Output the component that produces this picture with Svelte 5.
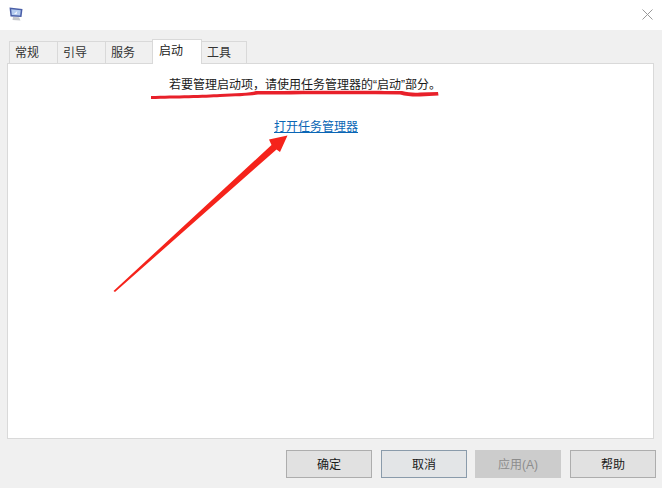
<script lang="ts">
  const tabs = ["常规", "引导", "服务", "启动", "工具"];
  const active = "启动";
  const buttons = [
    { label: "确定" },
    { label: "取消", focus: true },
    { label: "应用(A)", disabled: true },
    { label: "帮助" },
  ];
</script>

<div class="dialog">
  <header class="titlebar">
    <svg class="appicon" width="14" height="14" viewBox="0 0 14 14">
      <path d="M0.5 0.5 L13.5 2 L12.5 10 L1.5 9.5 Z" fill="#4a5fa8" />
      <path d="M2.2 2.2 L11.8 3.3 L11.1 8.6 L2.8 8.1 Z" fill="#b4cbef" />
      <path d="M5 7 L8.3 4 L7.5 7.2 Z" fill="#f4f7fd" />
      <path d="M4 10 L10 10.3 L11.5 13.5 L3.5 13 Z" fill="#c4c6cb" />
    </svg>
    <svg class="close" width="11" height="11" viewBox="0 0 11 11">
      <path d="M0.5 0.5 L10.5 10.5 M10.5 0.5 L0.5 10.5" stroke="#999" stroke-width="1" fill="none" />
    </svg>
  </header>

  <div class="body">
    <nav class="tabs">
      {#each tabs as tab}
        <div class="tab" class:active={tab === active}>{tab}</div>
      {/each}
    </nav>

    <section class="panel">
      <p class="hint">若要管理启动项，请使用任务管理器的“启动”部分。</p>
      <a class="link" href="#top">打开任务管理器</a>
    </section>

    <footer class="actions">
      {#each buttons as b}
        <button class:focus={b.focus} disabled={b.disabled}>{b.label}</button>
      {/each}
    </footer>
  </div>

  <svg class="marks" width="662" height="488" viewBox="0 0 662 488">
    <path d="M151 96 C175 95.5 205 95 220 94 C235 93.5 250 93 256 91 C300 90.5 380 90.5 402 91 C408 92.5 414 93 420 92.5 L438 92 L438.5 95.5 L420 96.5 C412 96.7 406 96 400 94.5 C350 94 300 94.5 258 94.5 C250 96 235 96.5 220 97 C205 98 175 98.5 151 99 Z" fill="#e8202a" />
    <path d="M113.5 291 L271.5 145 L269 139.5 L287.5 135.5 L280 152 L276.5 149.5 L115 292 Z" fill="#f5231b" />
  </svg>
</div>

<style>
  :global(body) {
    margin: 0;
    background: #f0f0f0;
  }

  .dialog {
    position: relative;
    width: 662px;
    height: 488px;
    overflow: hidden;
    font-family: "Liberation Sans", "Noto Sans CJK SC", sans-serif;
    font-size: 12px;
    color: #1a1a1a;
  }

  .titlebar {
    height: 30px;
    background: #fff;
    display: flex;
    align-items: flex-start;
    justify-content: space-between;
    padding: 7px 9px 0 9px;
    box-sizing: border-box;
  }

  .close {
    margin-top: 2px;
  }

  .body {
    height: 458px;
    background: #f0f0f0;
    padding: 9px 6px 0 7px;
    box-sizing: border-box;
    display: flex;
    flex-direction: column;
  }

  .tabs {
    display: flex;
    align-items: flex-end;
    height: 24px;
    padding-left: 2px;
    position: relative;
    z-index: 1;
  }

  .tab {
    width: 48px;
    height: 22px;
    box-sizing: border-box;
    border: 1px solid #d9d9d9;
    border-bottom: none;
    border-right: none;
    background: #f0f0f0;
    line-height: 22px;
    padding-left: 5px;
    color: #333;
  }

  .tab:nth-child(3) {
    width: 47px;
  }

  .tab:nth-child(5) {
    width: 45px;
    border-right: 1px solid #d9d9d9;
  }

  .tab.active {
    width: 50px;
    height: 25px;
    margin-bottom: -1px;
    padding-left: 6px;
    background: #fff;
    border-right: 1px solid #d9d9d9;
    line-height: 22px;
    color: #222;
  }

  .tab.active + .tab {
    border-left: none;
  }

  .panel {
    height: 376px;
    margin-right: 2px;
    box-sizing: border-box;
    background: #fff;
    border: 1px solid #d9d9d9;
    display: flex;
    flex-direction: column;
    align-items: flex-start;
    padding-top: 12px;
  }

  .hint {
    margin: 0 0 0 161px;
    line-height: 18px;
    color: #1a1a1a;
  }

  .link {
    margin: 24px 0 0 266px;
    line-height: 18px;
    color: #0a66b5;
    text-decoration: underline;
  }

  .actions {
    display: flex;
    justify-content: flex-end;
    gap: 9px;
    margin-top: 11px;
  }

  button {
    width: 86px;
    height: 28px;
    padding: 0 0 2px;
    background: #e1e1e1;
    border: 1px solid #adadad;
    font: inherit;
    color: #1a1a1a;
  }

  button:nth-child(3) {
    margin-left: -1px;
  }

  button.focus {
    background: #e3e5e7;
    border-color: #8a9bab;
  }

  button:disabled {
    background: #cccccc;
    border-color: #cccccc;
    color: #8c8c8c;
  }

  .marks {
    position: absolute;
    top: 0;
    left: 0;
    pointer-events: none;
  }
</style>
